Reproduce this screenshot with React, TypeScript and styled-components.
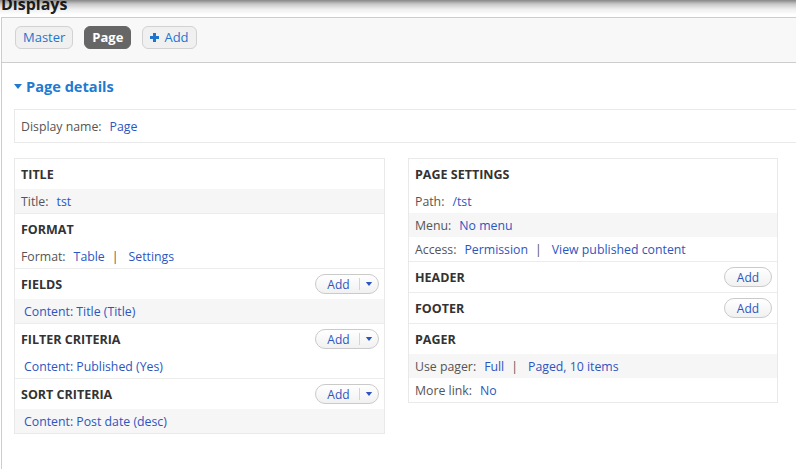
import React from "react";
import styled, { createGlobalStyle } from "styled-components";

const Global = createGlobalStyle`
  html, body { margin: 0; padding: 0; background: #fff; }
  body { font-family: "Open Sans", "Noto Sans", sans-serif; overflow: hidden; }
  * { box-sizing: border-box; }
`;

const Screen = styled.div`
  position: relative;
  width: 796px;
  height: 469px;
  overflow: hidden;
  background: #fff;
`;

const TopShade = styled.div`
  position: absolute;
  left: 0;
  top: 0;
  width: 100%;
  height: 15px;
  pointer-events: none;
  background: linear-gradient(
    to bottom,
    rgba(0, 0, 0, 0.47) 0px,
    rgba(0, 0, 0, 0.22) 4px,
    rgba(0, 0, 0, 0.07) 9px,
    rgba(0, 0, 0, 0) 15px
  );
`;

const Heading = styled.h2`
  margin: -4px 0 4px 1px;
  height: 17px;
  line-height: 17px;
  font-size: 16px;
  font-weight: 700;
  color: #222;
`;

const DisplaysPanel = styled.div`
  margin-left: 1px;
  width: 920px;
  border-top: 1px solid #cdcdcd;
  border-left: 1px solid #cdcdcd;
  min-height: 460px;
`;

const TabBar = styled.div`
  height: 45px;
  background: #f8f8f8;
  border-bottom: 1px solid #cdcdcd;
  display: flex;
  align-items: flex-start;
  gap: 11px;
  padding: 8px 0 0 13px;
`;

const TabButton = styled.span<{ $active?: boolean }>`
  display: inline-flex;
  align-items: center;
  gap: 5px;
  height: 23px;
  padding: 0 7px;
  border-radius: 6px;
  font-size: 13px;
  line-height: 21px;
  font-weight: ${(p) => (p.$active ? 700 : 400)};
  color: ${(p) => (p.$active ? "#fff" : "#1f74cc")};
  background: ${(p) => (p.$active ? "#666" : "#f0f0f0")};
  border: 1px solid ${(p) => (p.$active ? "#666" : "#d2d2d2")};
`;

const Content = styled.div`
  padding-left: 12px;
`;

const Legend = styled.div`
  margin-top: 13px;
  height: 20px;
  display: flex;
  align-items: center;
  gap: 4px;
  font-size: 14.6px;
  line-height: 20px;
  font-weight: 700;
  color: #1f7ad0;
`;

const NameBox = styled.div`
  margin-top: 13px;
  height: 34px;
  width: 900px;
  border: 1px solid #e9e9e9;
  display: flex;
  align-items: center;
  padding: 0 6px;
  font-size: 12.3px;
`;

const Columns = styled.div`
  margin-top: 15px;
  display: grid;
  grid-template-columns: 371px 370px;
  column-gap: 23px;
  align-items: start;
`;

const Column = styled.div`
  border: 1px solid #e9e9e9;
`;

const Section = styled.div`
  & + & {
    border-top: 1px solid #ececec;
  }
`;

const SectionHeader = styled.div`
  height: 30px;
  display: flex;
  align-items: center;
  justify-content: space-between;
  padding: 0 5px 0 6px;
  font-size: 12.5px;
  font-weight: 700;
  color: #333;
  text-transform: uppercase;
`;

const Row = styled.div<{ $shaded?: boolean; $indent?: boolean }>`
  height: 24px;
  display: flex;
  align-items: center;
  padding-left: ${(p) => (p.$indent ? "9px" : "6px")};
  font-size: 12.3px;
  background: ${(p) => (p.$shaded ? "#f6f6f6" : "transparent")};
`;

const Label = styled.span`
  color: #555;
  margin-right: 8px;
`;

const Link = styled.a`
  color: #2d55bf;
  text-decoration: none;
`;

const Pipe = styled.span`
  color: #555;
  margin: 0 10px 0 7px;
`;

const PillButton = styled.span`
  display: inline-flex;
  align-items: center;
  justify-content: center;
  height: 20px;
  width: 48px;
  border: 1px solid #cacaca;
  border-radius: 10px;
  background: linear-gradient(#ffffff, #f1f1f1);
  font-size: 12px;
  font-weight: 400;
  color: #2d55bf;
  text-transform: none;
`;

const DropButton = styled.span`
  display: inline-flex;
  align-items: center;
  height: 20px;
  width: 64px;
  border: 1px solid #cacaca;
  border-radius: 10px;
  background: linear-gradient(#ffffff, #f1f1f1);
  font-size: 12px;
  font-weight: 400;
  color: #2d55bf;
  text-transform: none;
`;

const DropMain = styled.span`
  width: 43px;
  text-align: center;
  padding-left: 2px;
`;

const DropToggle = styled.span`
  flex: 1;
  height: 12px;
  border-left: 1px solid #d4d4d4;
  display: flex;
  align-items: center;
  justify-content: center;
`;

const Caret = ({ color = "#2d55bf", w = 8, h = 5 }: { color?: string; w?: number; h?: number }) => (
  <svg width={w} height={h} viewBox="0 0 8 5">
    <polygon points="0,0 8,0 4,5" fill={color} />
  </svg>
);

const PlusIcon = () => (
  <svg width="9" height="9" viewBox="0 0 9 9">
    <rect x="3" y="0" width="3" height="9" fill="#1f74cc" />
    <rect x="0" y="3" width="9" height="3" fill="#1f74cc" />
  </svg>
);

const AddDrop = () => (
  <DropButton>
    <DropMain>Add</DropMain>
    <DropToggle>
      <Caret w={8} h={4} />
    </DropToggle>
  </DropButton>
);

export default function App() {
  return (
    <Screen>
      <Global />
      <Heading>Displays</Heading>
      <DisplaysPanel>
        <TabBar>
          <TabButton>Master</TabButton>
          <TabButton $active>Page</TabButton>
          <TabButton>
            <PlusIcon />
            Add
          </TabButton>
        </TabBar>
        <Content>
          <Legend>
            <Caret color="#1f7ad0" w={8} h={5} />
            Page details
          </Legend>
          <NameBox>
            <Label>Display name:</Label>
            <Link href="#">Page</Link>
          </NameBox>
          <Columns>
            <Column>
              <Section>
                <SectionHeader>Title</SectionHeader>
                <Row $shaded>
                  <Label>Title:</Label>
                  <Link href="#">tst</Link>
                </Row>
              </Section>
              <Section>
                <SectionHeader>Format</SectionHeader>
                <Row>
                  <Label>Format:</Label>
                  <Link href="#">Table</Link>
                  <Pipe>|</Pipe>
                  <Link href="#">Settings</Link>
                </Row>
              </Section>
              <Section>
                <SectionHeader>
                  Fields
                  <AddDrop />
                </SectionHeader>
                <Row $shaded $indent>
                  <Link href="#">Content: Title (Title)</Link>
                </Row>
              </Section>
              <Section>
                <SectionHeader>
                  Filter criteria
                  <AddDrop />
                </SectionHeader>
                <Row $indent>
                  <Link href="#">Content: Published (Yes)</Link>
                </Row>
              </Section>
              <Section>
                <SectionHeader>
                  Sort criteria
                  <AddDrop />
                </SectionHeader>
                <Row $shaded $indent>
                  <Link href="#">Content: Post date (desc)</Link>
                </Row>
              </Section>
            </Column>
            <Column>
              <Section>
                <SectionHeader>Page settings</SectionHeader>
                <Row>
                  <Label>Path:</Label>
                  <Link href="#">/tst</Link>
                </Row>
                <Row $shaded>
                  <Label>Menu:</Label>
                  <Link href="#">No menu</Link>
                </Row>
                <Row>
                  <Label>Access:</Label>
                  <Link href="#">Permission</Link>
                  <Pipe>|</Pipe>
                  <Link href="#">View published content</Link>
                </Row>
              </Section>
              <Section>
                <SectionHeader>
                  Header
                  <PillButton>Add</PillButton>
                </SectionHeader>
              </Section>
              <Section>
                <SectionHeader>
                  Footer
                  <PillButton>Add</PillButton>
                </SectionHeader>
              </Section>
              <Section>
                <SectionHeader>Pager</SectionHeader>
                <Row $shaded>
                  <Label>Use pager:</Label>
                  <Link href="#">Full</Link>
                  <Pipe>|</Pipe>
                  <Link href="#">Paged, 10 items</Link>
                </Row>
                <Row>
                  <Label>More link:</Label>
                  <Link href="#">No</Link>
                </Row>
              </Section>
            </Column>
          </Columns>
        </Content>
      </DisplaysPanel>
      <TopShade />
    </Screen>
  );
}
